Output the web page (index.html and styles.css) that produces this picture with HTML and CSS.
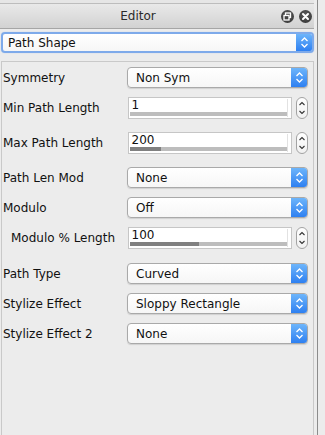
FILE: index.html
```html
<!DOCTYPE html>
<html lang="en">
<head>
    <meta charset="UTF-8">
    <title>Editor</title>
    <link rel="stylesheet" href="styles.css">
</head>
<body>
    <div class="window">
        <div class="dock">
            <div class="top-strip"></div>
            <div class="title-bar">
                <span class="title">Editor</span>
                <span class="title-button">
                    <svg width="13" height="13" viewBox="0 0 13 13"><rect x="4.5" y="3" width="5" height="4.5" fill="none" stroke="#fff" stroke-width="1.3"/><rect x="3" y="5.5" width="5" height="4.5" fill="#444" stroke="#fff" stroke-width="1.3"/></svg>
                </span>
                <span class="title-button">
                    <svg width="13" height="13" viewBox="0 0 13 13"><path d="M4 4 L9 9 M9 4 L4 9" stroke="#fff" stroke-width="2" stroke-linecap="round"/></svg>
                </span>
            </div>

            <div class="selector">
                <div class="combo focused">
                    <span class="combo-text">Path Shape</span>
                    <span class="combo-arrow">
                        <svg width="9" height="13" viewBox="0 0 9 13"><path d="M1.5 5 L4.5 2 L7.5 5 M1.5 8 L4.5 11 L7.5 8" fill="none" stroke="#fff" stroke-width="1.3"/></svg>
                    </span>
                </div>
            </div>

            <div class="panel">
                <div class="row">
                    <span class="label">Symmetry</span>
                    <div class="combo"><span class="combo-text">Non Sym</span><span class="combo-arrow"><svg width="9" height="13" viewBox="0 0 9 13"><path d="M1.5 5 L4.5 2 L7.5 5 M1.5 8 L4.5 11 L7.5 8" fill="none" stroke="#fff" stroke-width="1.3"/></svg></span></div>
                </div>
                <div class="row spin-row">
                    <span class="label">Min Path Length</span>
                    <div class="spin-field">
                        <span class="spin-text">1</span>
                        <div class="spin-bar"><div class="spin-fill" style="width: 0px"></div></div>
                    </div>
                    <span class="spinner"><svg width="12" height="22" viewBox="0 0 12 22"><path d="M3.5 8 L6 5.5 L8.5 8 M3.5 14 L6 16.5 L8.5 14" fill="none" stroke="#333" stroke-width="1.1"/></svg></span>
                </div>
                <div class="row spin-row">
                    <span class="label">Max Path Length</span>
                    <div class="spin-field">
                        <span class="spin-text">200</span>
                        <div class="spin-bar"><div class="spin-fill" style="width: 31px"></div></div>
                    </div>
                    <span class="spinner"><svg width="12" height="22" viewBox="0 0 12 22"><path d="M3.5 8 L6 5.5 L8.5 8 M3.5 14 L6 16.5 L8.5 14" fill="none" stroke="#333" stroke-width="1.1"/></svg></span>
                </div>
                <div class="row">
                    <span class="label">Path Len Mod</span>
                    <div class="combo"><span class="combo-text">None</span><span class="combo-arrow"><svg width="9" height="13" viewBox="0 0 9 13"><path d="M1.5 5 L4.5 2 L7.5 5 M1.5 8 L4.5 11 L7.5 8" fill="none" stroke="#fff" stroke-width="1.3"/></svg></span></div>
                </div>
                <div class="row">
                    <span class="label">Modulo</span>
                    <div class="combo"><span class="combo-text">Off</span><span class="combo-arrow"><svg width="9" height="13" viewBox="0 0 9 13"><path d="M1.5 5 L4.5 2 L7.5 5 M1.5 8 L4.5 11 L7.5 8" fill="none" stroke="#fff" stroke-width="1.3"/></svg></span></div>
                </div>
                <div class="row spin-row wide">
                    <span class="label indent">Modulo % Length</span>
                    <div class="spin-field">
                        <span class="spin-text">100</span>
                        <div class="spin-bar"><div class="spin-fill" style="width: 69px"></div></div>
                    </div>
                    <span class="spinner"><svg width="12" height="22" viewBox="0 0 12 22"><path d="M3.5 8 L6 5.5 L8.5 8 M3.5 14 L6 16.5 L8.5 14" fill="none" stroke="#333" stroke-width="1.1"/></svg></span>
                </div>
                <div class="row">
                    <span class="label">Path Type</span>
                    <div class="combo"><span class="combo-text">Curved</span><span class="combo-arrow"><svg width="9" height="13" viewBox="0 0 9 13"><path d="M1.5 5 L4.5 2 L7.5 5 M1.5 8 L4.5 11 L7.5 8" fill="none" stroke="#fff" stroke-width="1.3"/></svg></span></div>
                </div>
                <div class="row">
                    <span class="label">Stylize Effect</span>
                    <div class="combo"><span class="combo-text">Sloppy Rectangle</span><span class="combo-arrow"><svg width="9" height="13" viewBox="0 0 9 13"><path d="M1.5 5 L4.5 2 L7.5 5 M1.5 8 L4.5 11 L7.5 8" fill="none" stroke="#fff" stroke-width="1.3"/></svg></span></div>
                </div>
                <div class="row">
                    <span class="label">Stylize Effect 2</span>
                    <div class="combo"><span class="combo-text">None</span><span class="combo-arrow"><svg width="9" height="13" viewBox="0 0 9 13"><path d="M1.5 5 L4.5 2 L7.5 5 M1.5 8 L4.5 11 L7.5 8" fill="none" stroke="#fff" stroke-width="1.3"/></svg></span></div>
                </div>
            </div>
        </div>
        <div class="edge"></div>
    </div>
</body>
</html>
```

FILE: styles.css
```css
html, body {
    margin: 0;
    height: 100%;
}
body {
    background: #ececec;
    font-family: "DejaVu Sans", Verdana, sans-serif;
    font-size: 12px;
    color: #111;
    overflow: hidden;
}
.window {
    display: flex;
    height: 100%;
}
.dock {
    width: 314px;
    display: flex;
    flex-direction: column;
}
.edge {
    flex: 1;
    margin-left: 3px;
    border-left: 1px solid #8c8c8c;
    background: #ececec;
}
.top-strip {
    height: 3px;
    background: #e6e6e6;
    border-bottom: 1px solid #bdbdbd;
}
.title-bar {
    height: 24px;
    display: flex;
    align-items: center;
    gap: 5px;
    padding-right: 2px;
    background: linear-gradient(#e9e9e9, #d2d2d2);
    border-bottom: 1px solid #a6a6a6;
}
.title {
    flex: 1;
    text-align: center;
    font-size: 12px;
    color: #2a2a2a;
}
.title-button {
    width: 13px;
    height: 13px;
    border-radius: 50%;
    background: radial-gradient(circle at 50% 35%, #5a5a5a, #333);
    display: flex;
}
.selector {
    padding: 3px 0 0 1px;
}
.combo {
    flex: 1;
    height: 19px;
    display: flex;
    align-items: center;
    background: linear-gradient(#ffffff, #f6f6f6);
    border: 1px solid #a9a9a9;
    border-radius: 4px;
    box-shadow: 0 1px 1px rgba(0,0,0,0.12);
    overflow: hidden;
}
.combo.focused {
    height: 17px;
    border: 2px solid #7eaaea;
    border-radius: 4px;
    box-shadow: 0 0 1px #9ebfee;
}
.combo-text {
    flex: 1;
    padding-left: 8px;
}
.focused .combo-text {
    padding-left: 5px;
}
.combo-arrow {
    width: 16px;
    align-self: stretch;
    display: flex;
    align-items: center;
    justify-content: center;
    background: linear-gradient(#6db5fb, #2e80f1);
}
.panel {
    flex: 1;
    margin-top: 8px;
    margin-left: 1px;
    border: 1px solid #c9c9c9;
    border-bottom: none;
    padding: 5px 5px 0 1px;
    display: flex;
    flex-direction: column;
}
.row {
    display: flex;
    align-items: center;
    height: 21px;
    margin-bottom: 9px;
}
.spin-row {
    height: 22px;
    margin-bottom: 13px;
}
.spin-row.wide {
    margin-bottom: 14px;
}
.label {
    width: 124px;
}
.label.indent {
    padding-left: 8px;
    width: 116px;
}
.spin-field {
    width: 162px;
    height: 20px;
    margin-left: 1px;
    border: 1px solid #c6c6c6;
    background: #fff;
    display: flex;
    flex-direction: column;
    padding-left: 1px;
    position: relative;
}
.spin-field::after {
    content: "";
    position: absolute;
    right: 3px;
    top: 1px;
    bottom: 1px;
    width: 1px;
    background: #e2e2e2;
}
.spin-text {
    flex: 1;
    padding-left: 2px;
    line-height: 14px;
}
.spin-bar {
    flex: none;
    width: 157px;
    height: 4px;
    margin-bottom: 2px;
    background: #bdbdbd;
}
.spin-fill {
    height: 100%;
    background: #808080;
}
.spinner {
    width: 10px;
    height: 20px;
    margin-left: 4px;
    border: 1px solid #a3a3a3;
    border-radius: 6px;
    background: linear-gradient(#ffffff, #f1f1f1);
    display: flex;
    align-items: center;
    justify-content: center;
    overflow: hidden;
}
.spinner svg {
    flex: none;
}
```
